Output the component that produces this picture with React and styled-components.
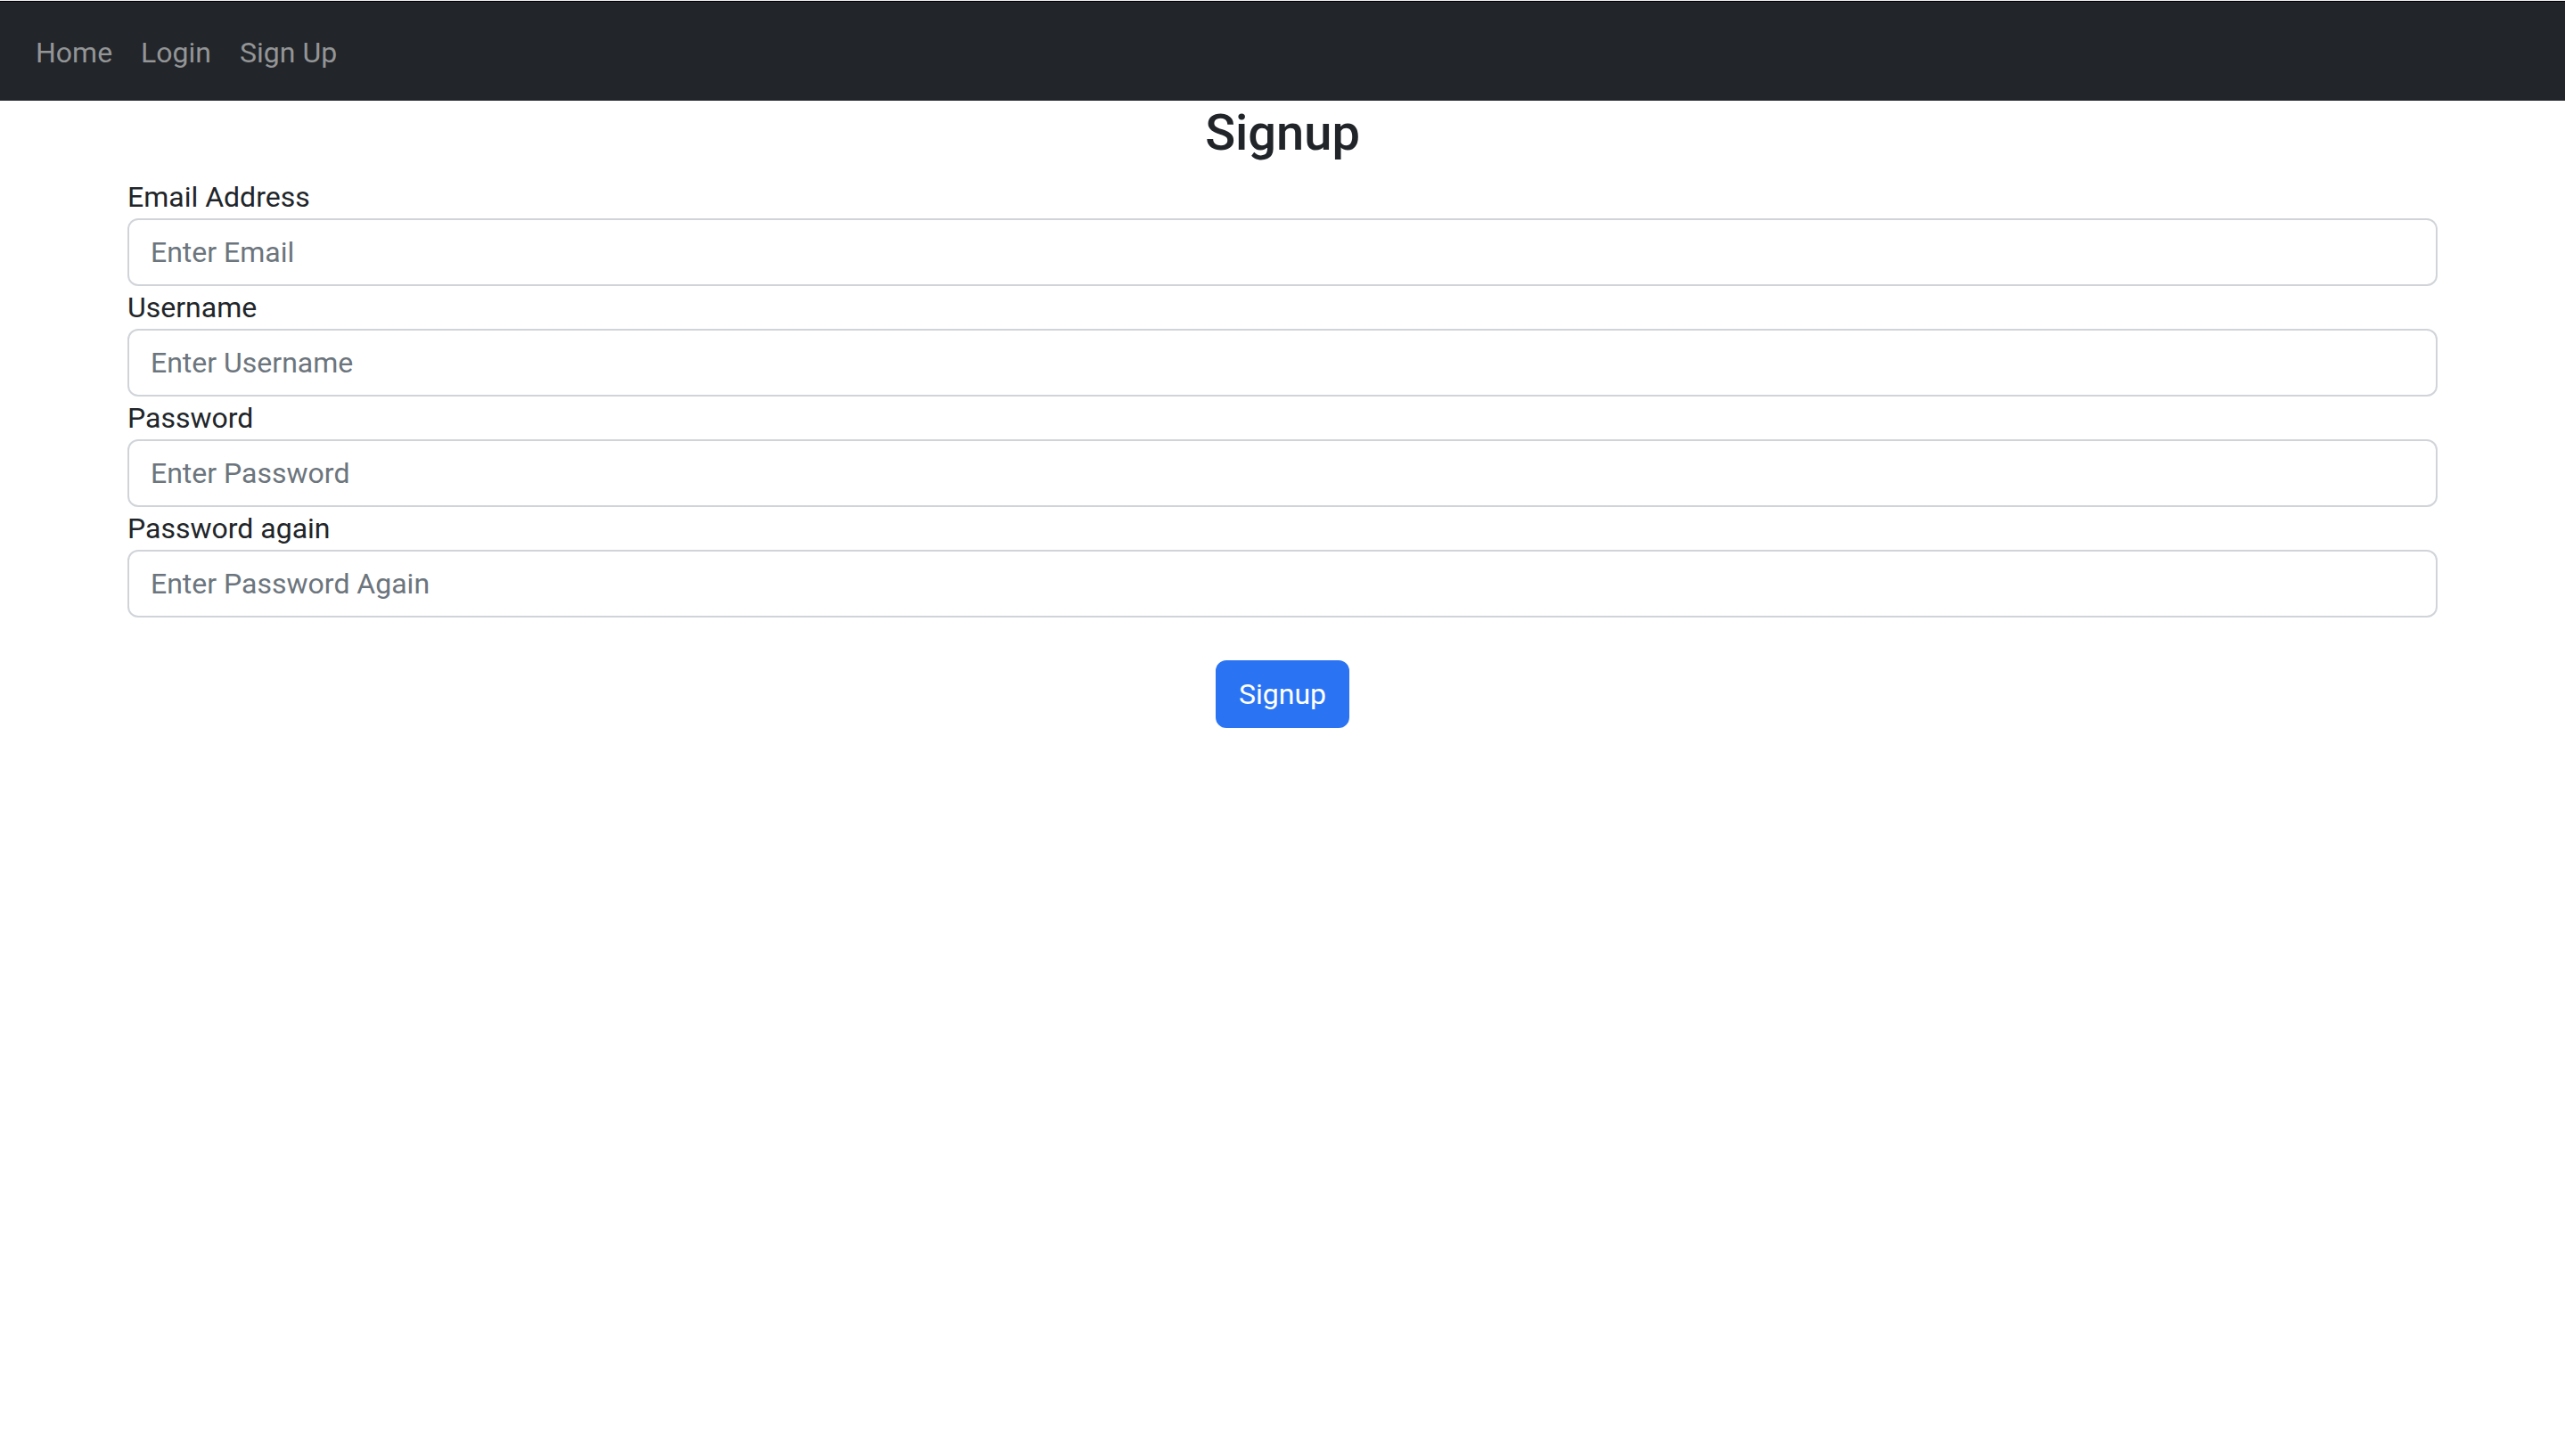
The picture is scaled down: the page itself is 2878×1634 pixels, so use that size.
import React from "react";
import styled, { createGlobalStyle } from "styled-components";

/* ---------------- GLOBAL ---------------- */

const GlobalStyle = createGlobalStyle`
  *, *::before, *::after { box-sizing: border-box; }
  body {
    margin: 0;
    background: #fff;
    color: #212529;
    font-family: Roboto, "Liberation Sans", Arial, sans-serif;
  }
`;

/* ---------------- NAVBAR ---------------- */

const TopStrip = styled.div`
  height: 2px;
  background: #f2f2f2;
  border-bottom: 1px solid #000;
`;

const Navbar = styled.nav`
  background: #222529;
  padding: 17px 24px 14px;
  display: flex;
  align-items: center;
`;

const NavList = styled.ul`
  list-style: none;
  margin: 0;
  padding: 0;
  display: flex;
`;

const NavLink = styled.a`
  display: block;
  padding: 16px;
  font-size: 32px;
  line-height: 48px;
  color: #939597;
  text-decoration: none;
  cursor: pointer;

  &:hover {
    color: #c4c5c7;
  }
`;

/* ---------------- FORM ---------------- */

const Container = styled.main`
  max-width: 2640px;
  margin: 0 auto;
  padding: 0 24px;
`;

const Title = styled.h3`
  margin: 0 0 14px;
  padding-top: 3px;
  font-size: 56px;
  font-weight: 500;
  line-height: 1.2;
  text-align: center;
  color: #212529;
`;

const Field = styled.div`
  display: flex;
  flex-direction: column;
`;

const Label = styled.label`
  font-size: 32px;
  line-height: 48px;
  color: #212529;
`;

const Input = styled.input`
  width: 100%;
  height: 76px;
  padding: 12px 24px;
  font-family: inherit;
  font-size: 32px;
  line-height: 48px;
  color: #212529;
  background: #fff;
  border: 2px solid #d0d4d9;
  border-radius: 12px;
  outline: none;

  &::placeholder {
    color: #6c757d;
  }

  &:focus {
    border-color: #86b7fe;
  }
`;

const Actions = styled.div`
  display: flex;
  justify-content: center;
  margin-top: 48px;
`;

const PrimaryBtn = styled.button`
  height: 76px;
  padding: 12px 24px;
  font-family: inherit;
  font-size: 32px;
  line-height: 48px;
  color: #fff;
  background: #2a74f4;
  border: 2px solid #2a74f4;
  border-radius: 12px;
  cursor: pointer;

  &:hover {
    background: #1d62d9;
  }
`;

/* ---------------- COMPONENT ---------------- */

const fields = [
  { id: "email", label: "Email Address", type: "email", placeholder: "Enter Email" },
  { id: "username", label: "Username", type: "text", placeholder: "Enter Username" },
  { id: "password", label: "Password", type: "password", placeholder: "Enter Password" },
  { id: "password2", label: "Password again", type: "password", placeholder: "Enter Password Again" }
];

const App = () => {
  return (
    <>
      <GlobalStyle />
      <TopStrip />
      <Navbar>
        <NavList>
          <li><NavLink>Home</NavLink></li>
          <li><NavLink>Login</NavLink></li>
          <li><NavLink>Sign Up</NavLink></li>
        </NavList>
      </Navbar>

      <Container>
        <Title>Signup</Title>
        <form onSubmit={e => e.preventDefault()}>
          {fields.map(f => (
            <Field key={f.id}>
              <Label htmlFor={f.id}>{f.label}</Label>
              <Input id={f.id} type={f.type} placeholder={f.placeholder} />
            </Field>
          ))}
          <Actions>
            <PrimaryBtn type="submit">Signup</PrimaryBtn>
          </Actions>
        </form>
      </Container>
    </>
  );
};

export default App;
